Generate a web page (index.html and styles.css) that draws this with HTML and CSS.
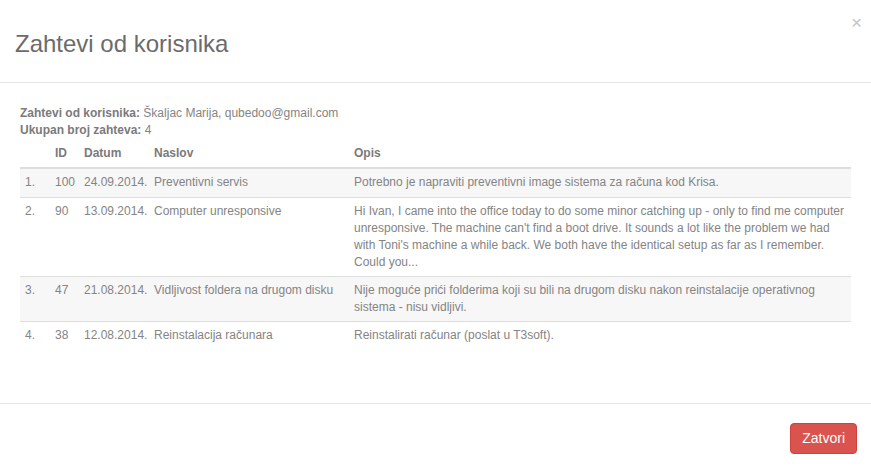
FILE: index.html
```html
<!DOCTYPE html>
<html lang="sr">
<head>
  <meta charset="UTF-8" />
  <title>Zahtevi od korisnika</title>
  <meta name="viewport" content="width=device-width, initial-scale=1">
  <link rel="stylesheet" href="styles.css">
</head>
<body>
  <div class="modal">
    <header class="modal-header">
      <h4 class="modal-title">Zahtevi od korisnika</h4>
      <button class="close" type="button">&times;</button>
    </header>

    <main class="modal-body">
      <div class="info">
        <p><b>Zahtevi od korisnika:</b> Škaljac Marija, qubedoo@gmail.com</p>
        <p><b>Ukupan broj zahteva:</b> 4</p>
      </div>

      <table class="requests">
        <thead>
          <tr>
            <th class="col-num"></th>
            <th class="col-id">ID</th>
            <th class="col-date">Datum</th>
            <th class="col-title">Naslov</th>
            <th>Opis</th>
          </tr>
        </thead>
        <tbody>
          <tr>
            <td>1.</td>
            <td>100</td>
            <td>24.09.2014.</td>
            <td>Preventivni servis</td>
            <td>Potrebno je napraviti preventivni image sistema za računa kod Krisa.</td>
          </tr>
          <tr>
            <td>2.</td>
            <td>90</td>
            <td>13.09.2014.</td>
            <td>Computer unresponsive</td>
            <td>Hi Ivan, I came into the office today to do some minor catching up - only to find me computer unresponsive. The machine can't find a boot drive. It sounds a lot like the problem we had with Toni's machine a while back. We both have the identical setup as far as I remember. Could you...</td>
          </tr>
          <tr>
            <td>3.</td>
            <td>47</td>
            <td>21.08.2014.</td>
            <td>Vidljivost foldera na drugom disku</td>
            <td>Nije moguće prići folderima koji su bili na drugom disku nakon reinstalacije operativnog sistema - nisu vidljivi.</td>
          </tr>
          <tr>
            <td>4.</td>
            <td>38</td>
            <td>12.08.2014.</td>
            <td>Reinstalacija računara</td>
            <td>Reinstalirati računar (poslat u T3soft).</td>
          </tr>
        </tbody>
      </table>
    </main>

    <footer class="modal-footer">
      <button class="btn-danger" type="button">Zatvori</button>
    </footer>
  </div>
</body>
</html>
```

FILE: styles.css
```css
/* Reset */
* {
  margin: 0;
  padding: 0;
  box-sizing: border-box;
}

html,
body {
  height: 100%;
}

body {
  font-family: 'Liberation Sans', Arial, Helvetica, sans-serif;
  font-size: 12px;
  line-height: 1.42857;
  color: #848484;
  background: #fff;
}

/* Modal frame */
.modal {
  display: flex;
  flex-direction: column;
  height: 100%;
}

.modal-header {
  display: flex;
  justify-content: space-between;
  align-items: flex-start;
  padding: 31px 9px 25px 15px;
  border-bottom: 1px solid #e5e5e5;
}

.modal-title {
  font-size: 24px;
  font-weight: normal;
  line-height: 26px;
  color: #6b6b6b;
}

.close {
  margin-top: -18px;
  background: none;
  border: none;
  font-family: inherit;
  font-size: 19px;
  line-height: 20px;
  color: #c6c6c6;
  cursor: pointer;
}

.modal-body {
  flex: 1;
  padding: 22px 20px 20px;
}

/* User info */
.info b {
  color: #7a7a7a;
}

/* Requests table */
.requests {
  width: 100%;
  margin-top: 1px;
  border-collapse: collapse;
  table-layout: fixed;
}

.requests th,
.requests td {
  padding: 5px;
  text-align: left;
  vertical-align: top;
}

.requests th {
  font-weight: bold;
  color: #7a7a7a;
  border-bottom: 2px solid #ddd;
}

.requests td {
  border-top: 1px solid #ddd;
}

.requests tbody tr:nth-child(odd) {
  background: #f7f7f7;
}

.col-num {
  width: 30px;
}

.col-id {
  width: 29px;
}

.col-date {
  width: 70px;
}

.col-title {
  width: 200px;
}

/* Footer */
.modal-footer {
  display: flex;
  justify-content: flex-end;
  padding: 19px 14px 17px;
  border-top: 1px solid #e5e5e5;
}

.btn-danger {
  background: #d9534f;
  color: #fff;
  border: 1px solid #d43f3a;
  border-radius: 4px;
  padding: 5px 11px;
  font-family: inherit;
  font-size: 14px;
  line-height: 19px;
  cursor: pointer;
}

.btn-danger:hover {
  background: #c9302c;
}
```
